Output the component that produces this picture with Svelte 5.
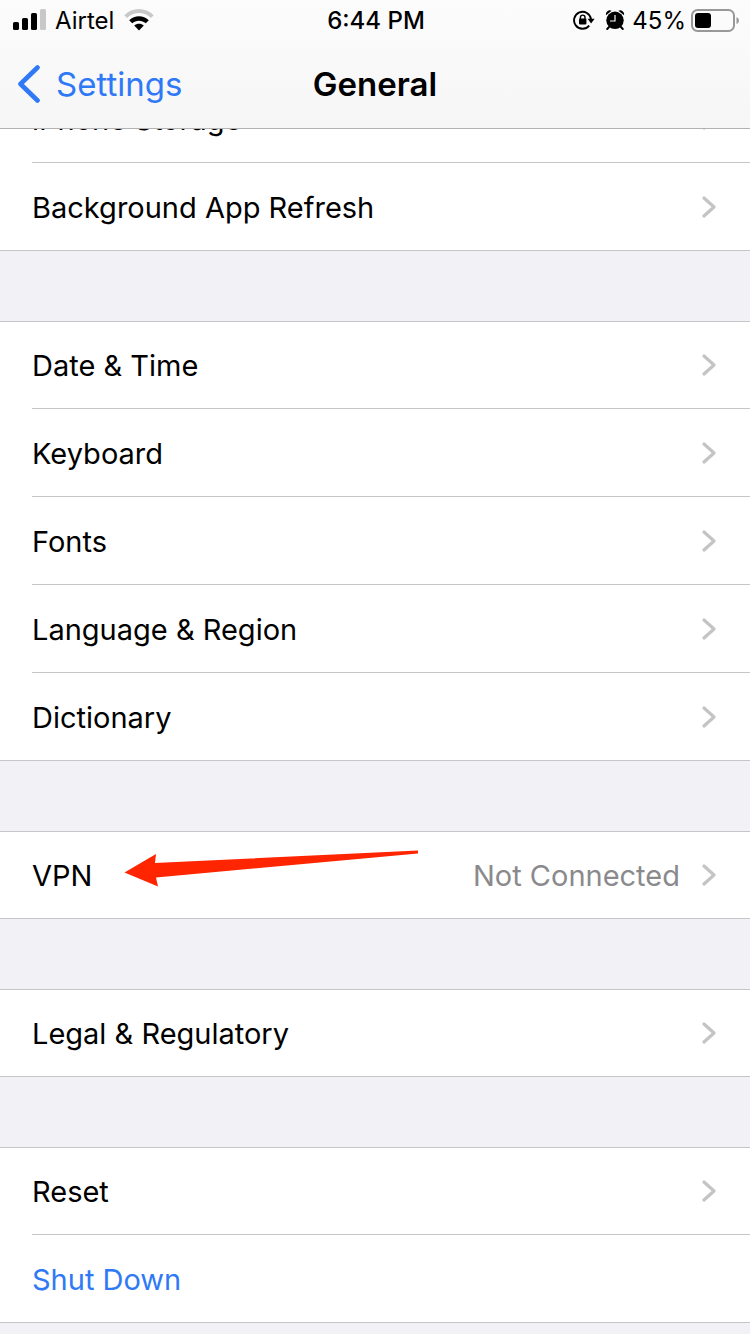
<script>
  const groups = [
    [{ label: 'iPhone Storage' }, { label: 'Background App Refresh' }],
    [
      { label: 'Date & Time' },
      { label: 'Keyboard' },
      { label: 'Fonts' },
      { label: 'Language & Region' },
      { label: 'Dictionary' }
    ],
    [{ label: 'VPN', value: 'Not Connected', marked: true }],
    [{ label: 'Legal & Regulatory' }],
    [{ label: 'Reset' }, { label: 'Shut Down', action: true }]
  ];
</script>

<div class="screen">
  <header>
    <div class="status">
      <div class="side">
        <svg class="signal" width="33" height="22" viewBox="0 0 33 22" aria-hidden="true">
          <rect x="0" y="13" width="6" height="8" rx="1.6" />
          <rect x="9" y="9" width="6" height="12" rx="1.6" />
          <rect x="18" y="4" width="6" height="17" rx="1.6" />
          <rect x="27" y="0" width="6" height="21" rx="1.6" fill="#c8c8c9" />
        </svg>
        <span>Airtel</span>
        <svg class="wifi" width="30" height="22" viewBox="0 0 30 22" aria-hidden="true">
          <path d="M0.3 6.2C8.4 -2 21.6 -2 29.7 6.2L27 9C20.4 2.4 9.600 2.400 3 9Z" fill="#c8c8c9" />
          <path d="M5.200 11.200C10.600 5.900 19.400 5.900 24.800 11.200L21.800 14.300C18 10.800 12 10.800 8.200 14.300Z" />
          <path d="M10.200 16.500C12.900 14 17.100 14 19.800 16.500L15 21.500Z" />
        </svg>
      </div>
      <time>6:44 PM</time>
      <div class="side end">
        <svg class="lock" width="22" height="20" viewBox="0 0 22 20" aria-hidden="true">
          <path d="M16.200 15.600A8.500 8.500 0 1 1 18 9.200" fill="none" stroke="#000" stroke-width="1.900" />
          <path d="M14.600 8.800H21.600L18.100 13.600Z" />
          <rect x="6" y="8.600" width="7.400" height="5.800" rx="0.800" />
          <path d="M7.400 9V7.400a2.300 2.300 0 0 1 4.600 0V9" fill="none" stroke="#000" stroke-width="1.400" />
        </svg>
        <svg class="alarm" width="20" height="20" viewBox="0 0 20 20" aria-hidden="true">
          <circle cx="10" cy="10.300" r="8.700" />
          <path d="M1 5.200A4 4 0 0 1 6.600 0.700ZM19 5.200A4 4 0 0 0 13.400 0.700Z" />
          <path d="M4.500 16.500L2.200 19M15.500 16.500L17.800 19" stroke="#000" stroke-width="1.900" stroke-linecap="round" />
          <path d="M10 5V11H5" fill="none" stroke="#fbfbfc" stroke-width="1.200" />
        </svg>
        <span class="percent">45%</span>
        <svg width="48" height="23" viewBox="0 0 48 23" aria-hidden="true">
          <rect x="1" y="1" width="42" height="21" rx="5.500" fill="none" stroke="#98989a" stroke-width="2" />
          <rect x="4" y="4" width="16" height="15" rx="3" />
          <path d="M45.500 8Q48 9 48 11.500T45.500 15Z" fill="#98989a" />
        </svg>
      </div>
    </div>
    <nav>
      <a class="back" href="#settings">
        <svg width="24" height="38" viewBox="0 0 24 38" aria-hidden="true">
          <path d="M20.500 2.500L3.500 19L20.500 35.500" fill="none" stroke="#3079f6" stroke-width="4.600" stroke-linecap="round" stroke-linejoin="round" />
        </svg>
        <span>Settings</span>
      </a>
      <h1>General</h1>
    </nav>
  </header>

  <main>
    {#each groups as rows}
      <ul>
        {#each rows as row}
          <li>
            {#if row.action}
              <button type="button"><span>{row.label}</span></button>
            {:else}
              <a class="row" href="#{row.label}">
                <span>{row.label}</span>
                {#if row.value}<span class="value">{row.value}</span>{/if}
                <svg class="chevron" width="14" height="22" viewBox="0 0 14 22" aria-hidden="true">
                  <path d="M2 2L12 11L2 20" fill="none" stroke="#c4c4c6" stroke-width="3.200" stroke-linecap="round" stroke-linejoin="round" />
                </svg>
              </a>
            {/if}
            {#if row.marked}
              <svg class="pointer" width="296" height="36" viewBox="0 0 296 36" aria-hidden="true">
                <path d="M0.500 19.500L32 1L31 10L294 -2.500L294 0.500L32 24.500L34 33.500Z" fill="#fe2500" />
              </svg>
            {/if}
          </li>
        {/each}
      </ul>
    {/each}
  </main>
</div>

<style>
  :global(body) {
    margin: 0;
    background: #f2f1f6;
  }

  .screen {
    min-height: 100vh;
    font-family: Inter, 'Liberation Sans', sans-serif;
    font-size: 29px;
    line-height: 40px;
    color: #000;
  }

  header {
    position: sticky;
    top: 0;
    z-index: 1;
    border-bottom: 1px solid #b2b2b4;
    background: linear-gradient(#fcfcfd, #f6f6f6);
  }

  .status {
    display: grid;
    grid-template-columns: 1fr auto 1fr;
    align-items: center;
    height: 41px;
    padding: 0 11px 0 13px;
    font-size: 24px;
  }

  .side {
    display: flex;
    align-items: center;
  }

  .side svg {
    margin-bottom: 1px;
  }

  .signal {
    margin-right: 9px;
  }

  .wifi {
    margin-left: 10px;
  }

  .end {
    justify-content: flex-end;
  }

  .alarm {
    margin: 0 7px 0 10px;
  }

  .percent {
    margin-right: 5px;
  }

  time {
    font-weight: 500;
  }

  nav {
    display: grid;
    grid-template-columns: 1fr auto 1fr;
    align-items: center;
    box-sizing: border-box;
    height: 87px;
    padding: 0 17px 2px;
    font-size: 33px;
  }

  .back {
    display: flex;
    align-items: center;
    gap: 15px;
    color: #3079f6;
    text-decoration: none;
  }

  h1 {
    margin: 0;
    font-size: 33px;
    font-weight: 600;
  }

  main {
    display: flex;
    flex-direction: column;
    gap: 70px;
    margin-top: -54px;
    padding-bottom: 11px;
  }

  ul {
    margin: 0;
    padding: 0;
    list-style: none;
    background: #fff;
    border-top: 1px solid #c6c6c8;
    border-bottom: 1px solid #c6c6c8;
  }

  li {
    position: relative;
    margin-left: 32px;
  }

  li + li {
    border-top: 1px solid #c6c6c8;
  }

  .row,
  button {
    display: flex;
    align-items: center;
    box-sizing: border-box;
    width: 100%;
    height: 87px;
    padding: 0 34px 0 0;
    border: 0;
    background: none;
    color: inherit;
    font: inherit;
    text-align: left;
    text-decoration: none;
  }

  li:first-child .row {
    height: 86px;
  }

  li span {
    padding-top: 2px;
  }

  button {
    color: #3079f6;
  }

  .value {
    margin-left: auto;
    color: #8a8a8d;
  }

  .chevron {
    margin-left: auto;
  }

  .value + .chevron {
    margin-left: 22px;
  }

  .pointer {
    position: absolute;
    top: 21px;
    left: 92px;
    overflow: visible;
  }
</style>
